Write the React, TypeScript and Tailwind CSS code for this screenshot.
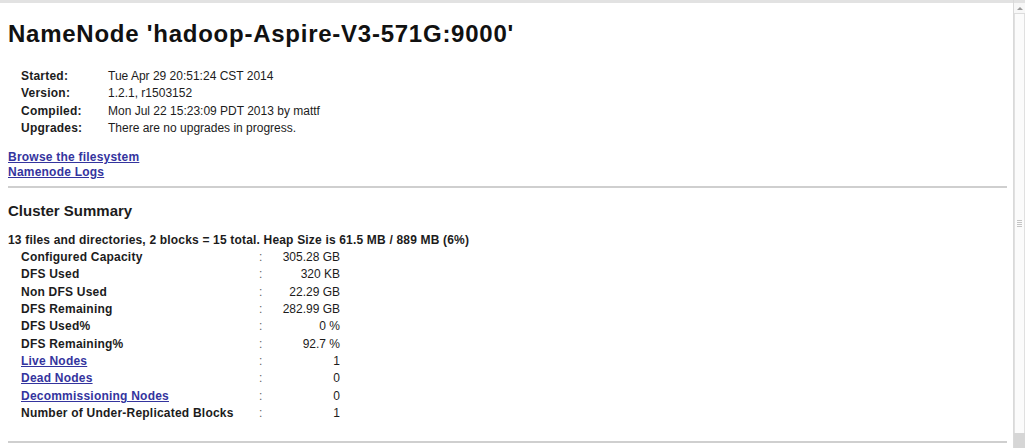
import React from "react";

// Hadoop 1.x NameNode status page (dfshealth.jsp), top part.

type InfoRow = { label: string; value: string };
type SummaryRow = { label: string; value: string; link?: boolean };

const info: InfoRow[] = [
  { label: "Started:", value: "Tue Apr 29 20:51:24 CST 2014" },
  { label: "Version:", value: "1.2.1, r1503152" },
  { label: "Compiled:", value: "Mon Jul 22 15:23:09 PDT 2013 by mattf" },
  { label: "Upgrades:", value: "There are no upgrades in progress." },
];

const summary: SummaryRow[] = [
  { label: "Configured Capacity", value: "305.28 GB" },
  { label: "DFS Used", value: "320 KB" },
  { label: "Non DFS Used", value: "22.29 GB" },
  { label: "DFS Remaining", value: "282.99 GB" },
  { label: "DFS Used%", value: "0 %" },
  { label: "DFS Remaining%", value: "92.7 %" },
  { label: "Live Nodes", value: "1", link: true },
  { label: "Dead Nodes", value: "0", link: true },
  { label: "Decommissioning Nodes", value: "0", link: true },
  { label: "Number of Under-Replicated Blocks", value: "1" },
];

const linkCls = "font-bold tracking-[0.22px] text-[#34349e] underline underline-offset-[1px]";

function Scrollbar() {
  return (
    <div className="flex w-[12px] flex-col border-l border-[#d9d9d9] bg-[#f3f3f3]">
      <div className="h-[3px] bg-[#e2e2e2]" />
      <div className="flex h-[11px] items-center justify-center border-b border-[#dcdcdc] bg-[#f7f7f7]">
        <div className="h-0 w-0 border-x-[3px] border-b-[3px] border-x-transparent border-b-[#9a9a9a]" />
      </div>
      <div className="flex flex-1 items-center justify-center border-x border-[#e0e0e0] bg-[#fbfbfb]">
        <div className="flex flex-col gap-[1px]">
          <div className="h-[1px] w-[5px] bg-[#c4c4c4]" />
          <div className="h-[1px] w-[5px] bg-[#c4c4c4]" />
          <div className="h-[1px] w-[5px] bg-[#c4c4c4]" />
          <div className="h-[1px] w-[5px] bg-[#c4c4c4]" />
        </div>
      </div>
      <div className="h-[15px] bg-[#d6d6d6]" />
    </div>
  );
}

export default function App() {
  return (
    <div className="flex h-[448px] w-[1025px] overflow-hidden bg-white font-['Liberation_Sans',Arial,sans-serif] text-[#1c1c1c]">
      <main className="flex-1 border-t-[3px] border-[#e2e2e2] pl-2 pr-[6px]">
        <h1 className="mt-[17px] text-[24px] font-bold leading-[28px] tracking-[0.75px] text-[#111]">
          NameNode 'hadoop-Aspire-V3-571G:9000'
        </h1>

        <div className="ml-[13px] mt-[20px] grid grid-cols-[87px_auto] text-[12px] leading-[17.4px]">
          {info.map((r) => (
            <React.Fragment key={r.label}>
              <div className="font-bold tracking-[0.22px]">{r.label}</div>
              <div>{r.value}</div>
            </React.Fragment>
          ))}
        </div>

        <div className="mt-[12px] flex flex-col items-start text-[12px] leading-[15px]">
          <a href="#" className={linkCls}>
            Browse the filesystem
          </a>
          <a href="#" className={linkCls}>
            Namenode Logs
          </a>
        </div>

        <div className="mt-[6px] h-[2px] bg-[#cfcfcf]" />

        <h3 className="mt-[14px] text-[15px] font-bold leading-[18px]">Cluster Summary</h3>

        <div className="mt-[12px] text-[12px] font-bold leading-[17.4px] tracking-[0.18px]">
          13 files and directories, 2 blocks = 15 total. Heap Size is 61.5 MB / 889 MB (6%)
        </div>

        <div className="ml-[13px] grid grid-cols-[238px_8px_73px] text-[12px] leading-[17.35px]">
          {summary.map((r) => (
            <React.Fragment key={r.label}>
              <div className="font-bold tracking-[0.22px]">
                {r.link ? (
                  <a href="#" className={linkCls}>
                    {r.label}
                  </a>
                ) : (
                  r.label
                )}
              </div>
              <div className="text-[#666]">:</div>
              <div className="text-right">{r.value}</div>
            </React.Fragment>
          ))}
        </div>

        <div className="mt-[19px] h-[2px] bg-[#cfcfcf]" />
      </main>
      <Scrollbar />
    </div>
  );
}
